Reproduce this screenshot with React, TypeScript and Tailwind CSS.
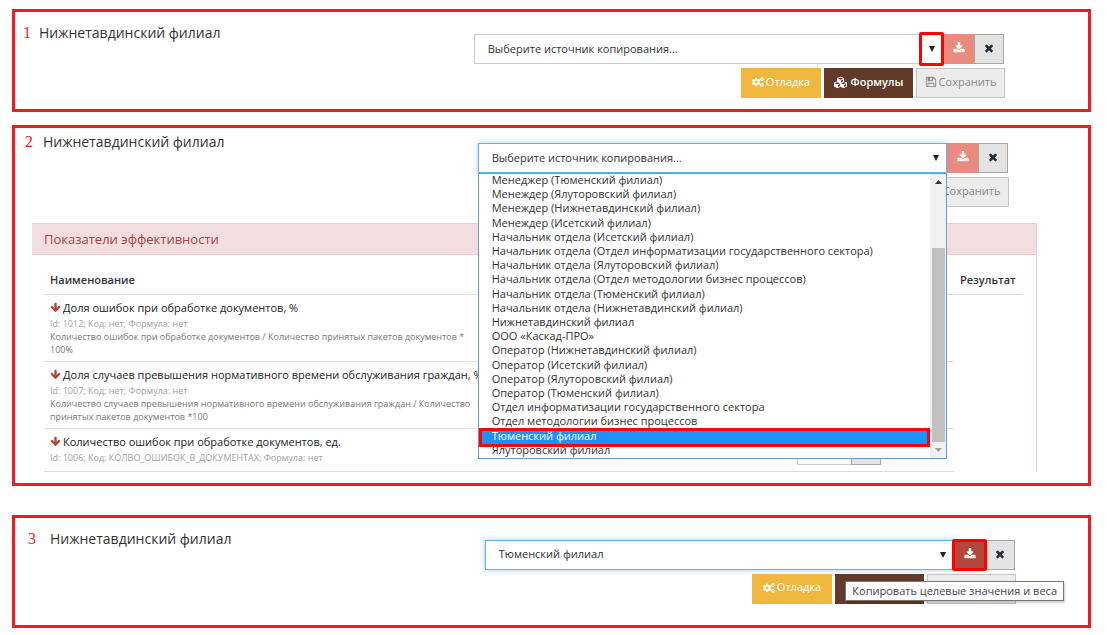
import { useState } from "react";
import { FaCogs, FaCubes } from "react-icons/fa";

const sources = [
  "Менеджер (Тюменский филиал)",
  "Менеждер (Ялуторовский филиал)",
  "Менеждер (Нижнетавдинский филиал)",
  "Менеждер (Исетский филиал)",
  "Начальник отдела (Исетский филиал)",
  "Начальник отдела (Отдел информатизации государственного сектора)",
  "Начальник отдела (Ялуторовский филиал)",
  "Начальник отдела (Отдел методологии бизнес процессов)",
  "Начальник отдела (Тюменский филиал)",
  "Начальник отдела (Нижнетавдинский филиал)",
  "Нижнетавдинский филиал",
  "ООО «Каскад-ПРО»",
  "Оператор (Нижнетавдинский филиал)",
  "Оператор (Исетский филиал)",
  "Оператор (Ялуторовский филиал)",
  "Оператор (Тюменский филиал)",
  "Отдел информатизации государственного сектора",
  "Отдел методологии бизнес процессов",
  "Тюменский филиал",
  "Ялуторовский филиал",
];

const indicators = [
  {
    name: "Доля ошибок при обработке документов, %",
    meta: "Id: 1012; Код: нет; Формула: нет",
    text: "Количество ошибок при обработке документов / Количество принятых пакетов документов * 100%",
  },
  {
    name: "Доля случаев превышения нормативного времени обслуживания граждан, %",
    meta: "Id: 1007; Код: нет; Формула: нет",
    text: "Количество случаев превышения нормативного времени обслуживания граждан / Количество принятых пакетов документов *100",
  },
  {
    name: "Количество ошибок при обработке документов, ед.",
    meta: "Id: 1006; Код: КОЛВО_ОШИБОК_В_ДОКУМЕНТАХ; Формула: нет",
    text: "",
    input: true,
  },
];

const paths = {
  arrow:
    "M1675 832q0 53-37 90l-651 652q-39 37-91 37-53 0-90-37l-651-652q-38-36-38-90 0-53 38-91l74-75q39-37 91-37 53 0 90 37l294 294v-704q0-52 38-90t90-38h128q52 0 90 38t38 90v704l294-294q37-37 90-37 52 0 91 37l75 75q37 39 37 91z",
  times:
    "M1490 1322q0 40-28 68l-136 136q-28 28-68 28t-68-28l-294-294-294 294q-28 28-68 28t-68-28l-136-136q-28-28-28-68t28-68l294-294-294-294q-28-28-28-68t28-68l136-136q28-28 68-28t68 28l294 294 294-294q28-28 68-28t68 28l136 136q28 28 28 68t-28 68l-294 294 294 294q28 28 28 68z",
  download:
    "M1344 1344q0-26-19-45t-45-19-45 19-19 45 19 45 45 19 45-19 19-45zm256 0q0-26-19-45t-45-19-45 19-19 45 19 45 45 19 45-19 19-45zm128-224v320q0 40-28 68t-68 28h-1472q-40 0-68-28t-28-68v-320q0-40 28-68t68-28h465l135 136q58 56 136 56t136-56l136-136h464q40 0 68 28t28 68zm-325-569q17 41-14 70l-448 448q-18 19-45 19t-45-19l-448-448q-31-29-14-70 17-39 59-39h256v-448q0-26 19-45t45-19h256q26 0 45 19t19 45v448h256q42 0 59 39z",
  save: "M512 1536h768v-384h-768v384zm896 0h128v-896q0-14-10-38.500t-20-34.500l-281-281q-10-10-34-20t-39-10v416q0 40-28 68t-68 28h-576q-40 0-68-28t-28-68v-416h-128v1280h128v-416q0-40 28-68t68-28h832q40 0 68 28t28 68v416zm-384-928v-320q0-13-9.500-22.500t-22.500-9.500h-192q-13 0-22.500 9.500t-9.500 22.500v320q0 13 9.500 22.500t22.500 9.500h192q13 0 22.500-9.500t9.500-22.500zm640 32v896q0 40-28 68t-68 28h-1344q-40 0-68-28t-28-68v-1344q0-40 28-68t68-28h928q40 0 88 20t76 48l280 280q28 28 48 76t20 88z",
};

const Icon = ({ name, size = 12 }: { name: keyof typeof paths; size?: number }) => (
  <svg
    className="shrink-0"
    width={size}
    height={size}
    viewBox="0 0 1792 1792"
    fill="currentColor"
    aria-hidden="true"
  >
    <path d={paths[name]} />
  </svg>
);

const SourceList = () => (
  <div className="absolute top-full left-0 z-10 flex h-[286px] w-full border border-[#7096d0] bg-white">
    <ul
      role="listbox"
      aria-label="Источник копирования"
      className="grid min-w-0 flex-1 auto-rows-fr text-[11px] leading-[12px] text-[#333]"
    >
      {sources.map((s) =>
        s === "Тюменский филиал" ? (
          <li
            key={s}
            role="option"
            aria-selected="true"
            className="relative z-10 bg-[#1e90ff] pl-[13px] text-white"
          >
            {s}
            <span className="absolute inset-x-0 -top-0.5 -bottom-[3px] border-3 border-[#ff0000]" />
          </li>
        ) : (
          <li key={s} role="option" aria-selected="false" className="pl-[13px] whitespace-nowrap">
            {s}
          </li>
        )
      )}
    </ul>
    <div className="flex w-4 flex-col items-center bg-[#f0f0f0]">
      <svg className="my-1.5 shrink-0" width="7" height="4" fill="#333355">
        <path d="M0 4L3.500 0L7 4z" />
      </svg>
      <div className="mt-[58px] w-[13px] flex-1 bg-[#c1c1c1]" />
      <svg className="my-1.5 shrink-0" width="7" height="4" fill="#a39f9f">
        <path d="M0 0L3.500 4L7 0z" />
      </svg>
    </div>
  </div>
);

const Toolbar = ({ initial, focused, open, mark }: any) => {
  const [source, setSource] = useState(initial || "");
  return (
    <div className="mt-[13px] w-[55%] shrink-0">
      <div className="mr-px flex h-[30px]">
        <div className="relative flex-1">
          <select
            aria-label="Источник копирования"
            value={source}
            onChange={(e) => setSource(e.target.value)}
            className={`h-full w-full appearance-none border bg-white pl-[13px] text-[11px] text-[#333] outline-none ${
              focused
                ? "border-[#66afe9] shadow-[0_0_6px_rgba(102,175,233,0.6)]"
                : "border-[#ccc]"
            }`}
          >
            <option value="">Выберите источник копирования...</option>
            {sources.map((s) => (
              <option key={s}>{s}</option>
            ))}
          </select>
          <svg
            className="pointer-events-none absolute top-3 right-2"
            width="6"
            height="6"
            fill="#222"
          >
            <path d="M0 0H6L3 6z" />
          </svg>
          {mark === "caret" && (
            <span className="pointer-events-none absolute -inset-y-0.5 -right-px z-10 w-[25px] rounded-xs border-3 border-[#ff0000]" />
          )}
          {open && <SourceList />}
        </div>
        <button
          aria-label="Копировать целевые значения и веса"
          className={`relative flex w-[31px] items-center justify-center pb-0.5 text-white ${
            mark === "download" ? "bg-[#b2483d]" : "bg-[#e98c7f]"
          }`}
        >
          <Icon name="download" />
          {mark === "download" && (
            <span className="absolute -inset-x-0.5 -inset-y-px rounded-xs border-3 border-[#ff0000]" />
          )}
        </button>
        <button
          aria-label="Очистить"
          onClick={() => setSource("")}
          className="flex w-[30px] items-center justify-center border border-[#aea59e] bg-[#e3e3e3] pb-0.5 text-[#2b2b38]"
        >
          <Icon name="times" />
        </button>
      </div>
      <div className="relative mt-1 flex h-[30px] justify-end gap-[3px] text-[11px] text-white">
        <button className="flex w-20 items-center justify-center gap-0.5 bg-[#efb73e] pb-0.5 font-medium whitespace-nowrap">
          <FaCogs size={12} />
          Отладка
        </button>
        <button className="flex w-[89px] items-center justify-center gap-1 bg-[#613a2a] pb-0.5 font-semibold whitespace-nowrap">
          <FaCubes size={13} />
          Формулы
        </button>
        <button
          disabled
          className="flex w-[89px] items-center justify-center gap-0.5 border border-[#c8c2c0] bg-[#ececec] pb-0.5 whitespace-nowrap text-[#8a8585]"
        >
          <Icon name="save" />
          Сохранить
        </button>
        {mark === "download" && (
          <div
            role="tooltip"
            className="absolute top-[7px] -right-12 border border-[#767676] bg-white px-[6px] text-[11px] leading-[18px] whitespace-nowrap text-[#494058] shadow-[1px_2px_2px_rgba(0,0,0,0.2)]"
          >
            Копировать целевые значения и веса
          </div>
        )}
      </div>
    </div>
  );
};

const Header = ({ num, className, ...rest }: any) => (
  <div className={`flex items-start ${className}`}>
    <span className="shrink-0 font-['Liberation_Serif',serif] text-base leading-6 text-[#ed1c24]">
      {num}
    </span>
    <div className="flex flex-1 items-start">
      <h2 className="flex-1 text-sm leading-6 whitespace-nowrap text-[#333]">
        Нижнетавдинский филиал
      </h2>
      <Toolbar {...rest} />
    </div>
  </div>
);

const Indicators = () => (
  <div className="mt-4 mr-[51px] ml-[17px] border-r border-[#ebccd1]">
    <h3 className="border-y border-[#ebccd1] bg-[#f2dede] px-3 text-[13px] leading-[30px] text-[#a94442]">
      Показатели эффективности
    </h3>
    <div className="pt-3 pr-[13px] pl-3">
      <table className="w-full table-fixed text-left">
        <thead>
          <tr className="h-[27px] border-b border-[#ddd] text-[11px] text-[#333]">
            <th className="w-[45%] px-1.5 font-semibold">Наименование</th>
            <th />
            <th className="w-[164px]" />
            <th className="w-[69px] px-1.5 font-semibold">Результат</th>
          </tr>
        </thead>
        <tbody>
          {indicators.map((row) => (
            <tr key={row.meta}>
              <td className="border-b border-[#ddd] pt-1 pb-[5px] pl-1.5 align-top">
                <div className="flex items-center gap-0.5 text-[11px] leading-[18px] whitespace-nowrap text-[#222]">
                  <span className="text-[#b5453c]">
                    <Icon name="arrow" size={11} />
                  </span>
                  {row.name}
                </div>
                <div className="text-[9px] leading-[13px] whitespace-nowrap text-[#a59e9e]">
                  {row.meta}
                </div>
                {row.text && (
                  <div className="text-[9px] leading-[13px] text-[#777]">{row.text}</div>
                )}
              </td>
              <td className="border-b border-[#ddd]" />
              <td className="border-b border-[#ddd] py-1.5 pl-[7px]">
                {row.input && (
                  <div className="flex h-[30px]">
                    <input
                      aria-label="Целевое значение"
                      className="w-[54px] border border-r-0 border-[#ccc]"
                    />
                    <button
                      aria-label="Очистить значение"
                      className="w-[30px] border border-[#aea59e] bg-[#e3e3e3]"
                    />
                  </div>
                )}
              </td>
            </tr>
          ))}
        </tbody>
      </table>
    </div>
  </div>
);

export default function App() {
  return (
    <main className="bg-white pt-[9px] pr-4 pb-[7px] pl-3 font-['Open_Sans','Noto_Sans',sans-serif]">
      <section className="border-3 border-[#ed1c24] pt-[9px] pb-[11px]">
        <Header num="1" className="gap-2 pr-[83px] pl-2" mark="caret" />
      </section>

      <section className="mt-[13px] border-3 border-[#ed1c24] pt-0.5 pb-[11px]">
        <Header num="2" className="gap-2.5 pr-[79px] pl-2.5" focused open />
        <Indicators />
      </section>

      <section className="mt-[29px] border-3 border-[#ed1c24] pt-[9px] pb-[21px]">
        <Header
          num="3"
          className="gap-3.5 pr-[72px] pl-[13px]"
          initial="Тюменский филиал"
          focused
          mark="download"
        />
      </section>
    </main>
  );
}
